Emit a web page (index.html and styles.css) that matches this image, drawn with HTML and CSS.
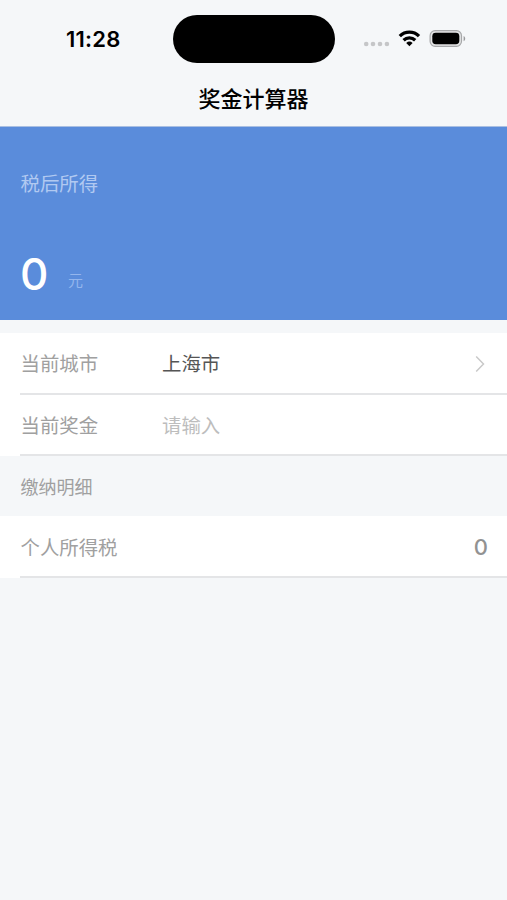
FILE: index.html
```html
<!DOCTYPE html>
<html lang="zh-CN">
<head>
<meta charset="utf-8">
<title>奖金计算器</title>
<link rel="stylesheet" href="styles.css">
</head>
<body>
<header class="header">
  <div class="status">
    <span class="time">11:28</span>
    <span class="island"></span>
    <svg class="indicators" width="104" height="22" viewBox="0 0 104 22">
      <g fill="#c5c6c8"><circle cx="3.2" cy="16" r="2.3"/><circle cx="10" cy="16" r="2.3"/><circle cx="17" cy="16" r="2.3"/><circle cx="23.9" cy="16" r="2.3"/></g>
      <g fill="none" stroke="#000" stroke-width="3.3"><path d="M36.8 8.1a13.6 13.6 0 0 1 19.2 0"/><path d="M40.6 12.2a8.3 8.3 0 0 1 11.6 0"/></g>
      <path d="M43.2 14.9a4.7 4.7 0 0 1 6.4 0l-3.2 3.3z"/>
      <rect x="67.1" y="2.7" width="31.4" height="15.6" rx="5" fill="#e4e5e6" stroke="#a7a8aa" stroke-width="1.2"/>
      <rect x="69.3" y="4.8" width="27" height="11.4" rx="3.4"/>
      <path d="M100.6 8v5.2c2.1-.9 2.1-4.3 0-5.2z" fill="#999a9c"/>
    </svg>
  </div>
  <h1 class="title">奖金计算器</h1>
</header>
<section class="summary">
  <div class="summary-label">税后所得</div>
  <div class="amount"><span class="amount-value">0</span><span class="amount-unit">元</span></div>
</section>
<main>
  <div class="row city">
    <span class="label">当前城市</span><span class="value">上海市</span>
    <svg class="chevron" width="10" height="18" viewBox="0 0 10 18"><path d="M1.2 1.5L8.5 9l-7.3 7.5" fill="none" stroke="#c9c9c9" stroke-width="1.5"/></svg>
  </div>
  <div class="row bonus"><span class="label">当前奖金</span><span class="placeholder">请输入</span></div>
  <h2 class="section-title">缴纳明细</h2>
  <div class="row tax"><span class="label">个人所得税</span><span class="tax-value">0</span></div>
</main>
</body>
</html>
```
FILE: styles.css
```css
* { box-sizing: border-box; }
body {
  margin: 0;
  min-height: 900px;
  background: #f5f7f9;
  font-family: Inter, "Noto Sans CJK SC", sans-serif;
  color: #a0a0a0;
}
.header { height: 127px; border-bottom: 1px solid #a9bfe2; }
.status {
  height: 78px;
  display: grid;
  grid-template-columns: 173px 162px 1fr;
  align-items: center;
}
.time {
  padding-left: 66px;
  font-size: 22px;
  font-weight: 600;
  letter-spacing: .2px;
  line-height: 26px;
  color: #000;
}
.island { height: 48px; border-radius: 24px; background: #000; }
.indicators { display: block; margin-left: 28px; }
.title {
  margin: 0;
  font-size: 22px;
  font-weight: 500;
  line-height: 42px;
  text-align: center;
  color: #000;
}
.summary {
  height: 193px;
  padding: 43px 20px 0;
  background: #5a8cdb;
  color: #b1c9f1;
}
.summary-label { padding-left: .5px; font-size: 19.4px; line-height: 28px; }
.amount { display: flex; align-items: center; margin-top: 49px; }
.amount-value { width: 48px; font-size: 44px; font-weight: 450; line-height: 54px; color: #fff; }
.amount-unit { padding-top: 13px; font-size: 15px; line-height: 20px; color: #94b6ed; }
main { padding-top: 13px; }
.row {
  display: flex;
  align-items: center;
  height: 62px;
  padding: 0 19px 2px 20.5px;
  font-size: 19.4px;
  background:
    linear-gradient(#e4e5e7, #e4e5e7) 20px 100% / 100% 2px no-repeat,
    #fff;
}
.city { padding-bottom: 3px; }
.label { width: 141.5px; }
.value { color: #555; }
.placeholder { color: #bdbdbd; }
.chevron { margin: 2px 3px 0 auto; }
.bonus { height: 61px; }
.section-title {
  margin: 0;
  padding: 1px 0 0 20.5px;
  height: 60px;
  font-size: 18px;
  font-weight: 400;
  line-height: 62px;
}
.tax-value { margin: 2px 0 0 auto; font-size: 22px; font-weight: 450; color: #929292; }
```
